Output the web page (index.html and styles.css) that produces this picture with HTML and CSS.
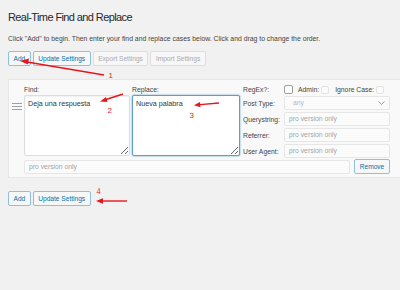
FILE: index.html
```html
<!DOCTYPE html>
<html>
<head>
<meta charset="utf-8">
<link rel="stylesheet" href="styles.css">
</head>
<body>
<div class="wrap">
  <h1 class="title">Real-Time Find and Replace</h1>
  <p class="desc">Click "Add" to begin. Then enter your find and replace cases below. Click and drag to change the order.</p>
  <div class="btn-row">
    <span class="btn">Add</span>
    <span class="btn">Update Settings</span>
    <span class="btn off">Export Settings</span>
    <span class="btn off">Import Settings</span>
  </div>

  <div class="panel">
    <div class="main-row">
      <div class="handle">
        <svg width="10" height="7" viewBox="0 0 10 7"><path d="M0 0.5H10M0 3.5H10M0 6.5H10" stroke="#a0a0a0" stroke-width="1"/></svg>
      </div>
      <div class="col col-find">
        <div class="lbl">Find:</div>
        <textarea class="ta">Deja una respuesta</textarea>
      </div>
      <div class="col col-repl">
        <div class="lbl">Replace:</div>
        <textarea class="ta focus">Nueva palabra</textarea>
      </div>
      <div class="opts">
        <div class="olbl">RegEx?:</div>
        <div class="checks">
          <span class="cb"></span>
          <span class="clbl">Admin:</span>
          <span class="cb faint"></span>
          <span class="clbl ic">Ignore Case:</span>
          <span class="cb faint"></span>
        </div>
        <div class="olbl">Post Type:</div>
        <div class="field sel"><span>any</span>
          <svg width="7" height="4" viewBox="0 0 7 4"><path d="M0.5 0.5L3.5 3.3L6.5 0.5" fill="none" stroke="#999" stroke-width="1"/></svg>
        </div>
        <div class="olbl">Querystring:</div>
        <div class="field">pro version only</div>
        <div class="olbl">Referrer:</div>
        <div class="field">pro version only</div>
        <div class="olbl">User Agent:</div>
        <div class="field">pro version only</div>
      </div>
    </div>
    <div class="bottom-row">
      <div class="field wide">pro version only</div>
      <span class="btn rm">Remove</span>
    </div>
  </div>

  <div class="btn-row lower">
    <span class="btn">Add</span>
    <span class="btn">Update Settings</span>
  </div>

  <svg class="annot" width="400" height="290" viewBox="0 0 400 290">
    <g stroke="#e8161b" stroke-width="1.4" fill="none">
      <path d="M104 75L27 62"/>
      <path d="M123 94L106 99.5"/>
      <path d="M219 103L200 104.6"/>
      <path d="M127 201L102 201"/>
    </g>
    <g fill="#e8161b">
      <path d="M20 61L29 58.5L28 64.5Z"/>
      <path d="M100 101.5L106 97L107.5 102Z"/>
      <path d="M194 105.2L200 102L200.5 107.2Z"/>
      <path d="M96 201L103 198.3L103 203.7Z"/>
    </g>
    <g fill="#e8161b" font-family="Liberation Sans, Arial, sans-serif" font-size="8">
      <text x="108.5" y="78">1</text>
      <text x="107.5" y="113">2</text>
      <text x="189.5" y="118">3</text>
    </g>
    <text x="96.5" y="194" fill="#e8161b" font-family="Liberation Serif, serif" font-size="8">4</text>
  </svg>
</div>
</body>
</html>
```
FILE: styles.css
```css
html, body {
  margin: 0;
  padding: 0;
}
body {
  background: #f1f1f1;
  font-family: "Liberation Sans", Arial, sans-serif;
  color: #444;
  overflow: hidden;
  width: 400px;
  height: 290px;
}
.wrap {
  position: relative;
  padding: 9px 0 0 8px;
  height: 281px;
}
.title {
  margin: 0;
  font-size: 11px;
  letter-spacing: -0.6px;
  line-height: 16px;
  font-weight: normal;
  color: #23282d;
}
.desc {
  margin: 9px 0 8px;
  font-size: 6.85px;
  line-height: 9px;
  color: #444;
  white-space: nowrap;
}
.btn-row {
  display: flex;
  gap: 2px;
}
.btn {
  box-sizing: border-box;
  height: 15px;
  padding: 0 4.5px;
  border: 1px solid #8fbfdc;
  border-radius: 2px;
  background: #f7f7f7;
  color: #0073aa;
  font-size: 6.6px;
  line-height: 13px;
  white-space: nowrap;
}
.btn.off {
  border-color: #dedede;
  color: #a7aaad;
}
.panel {
  margin-top: 13px;
  width: 392px;
  box-sizing: border-box;
  border: 1px solid #e6e6e6;
  border-right: none;
  background: #f9f9f9;
  padding: 5px 0 3px;
}
.main-row {
  display: flex;
  align-items: flex-start;
}
.handle {
  width: 15px;
  display: flex;
  justify-content: center;
  padding-top: 18px;
  box-sizing: border-box;
}
.handle svg {
  display: block;
}
.col {
  display: flex;
  flex-direction: column;
}
.col-find {
  width: 106px;
  margin-right: 2px;
}
.col-repl {
  width: 108px;
  margin-right: 3px;
}
.lbl {
  height: 10px;
  font-size: 6.8px;
  line-height: 10px;
  color: #444;
}
.ta {
  box-sizing: border-box;
  height: 61px;
  width: 100%;
  margin: 0;
  padding: 3px 3px;
  border: 1px solid #ddd;
  border-radius: 2px;
  background: #fff;
  font-family: "Liberation Sans", Arial, sans-serif;
  font-size: 7.2px;
  line-height: 9px;
  color: #32373c;
  box-shadow: inset 0 1px 2px rgba(0,0,0,0.07);
  outline: none;
}
.ta.focus {
  border-color: #5b9dd9;
  box-shadow: 0 0 2px rgba(30,140,190,0.8);
}
.opts {
  display: grid;
  grid-template-columns: 41px 106px;
  grid-template-rows: 9px 14px 14px 14px 14px;
  row-gap: 2px;
  align-items: center;
  margin-bottom: -2px;
}
.olbl {
  font-size: 6.8px;
  line-height: 9px;
  color: #444;
  white-space: nowrap;
}
.checks {
  display: flex;
  align-items: center;
  height: 9px;
}
.cb {
  box-sizing: border-box;
  width: 9px;
  height: 9px;
  border: 1px solid #9a9da1;
  border-radius: 2px;
  background: #fff;
}
.cb.faint {
  width: 8px;
  height: 8px;
  border-color: #e4e4e4;
  background: #fbfbfb;
}
.clbl {
  font-size: 6.8px;
  line-height: 9px;
  color: #444;
  margin: 0 2px 0 5px;
}
.clbl.ic {
  margin-left: 6px;
}
.field {
  box-sizing: border-box;
  height: 14px;
  border: 1px solid #e6e6e6;
  border-radius: 2px;
  background: #fbfbfb;
  padding: 0 4px;
  font-size: 6.8px;
  line-height: 12px;
  color: #a0a5aa;
  white-space: nowrap;
}
.sel {
  display: flex;
  align-items: center;
  justify-content: space-between;
  padding-left: 8px;
  color: #b4b9be;
}
.bottom-row {
  display: flex;
  align-items: center;
  gap: 4px;
  margin: 3px 0 0 15px;
}
.field.wide {
  width: 326px;
}
.btn.rm {
  width: 36px;
  text-align: center;
  padding: 0;
}
.lower {
  margin-top: 13px;
}
.annot {
  position: absolute;
  left: 0;
  top: 0;
  pointer-events: none;
}
```
